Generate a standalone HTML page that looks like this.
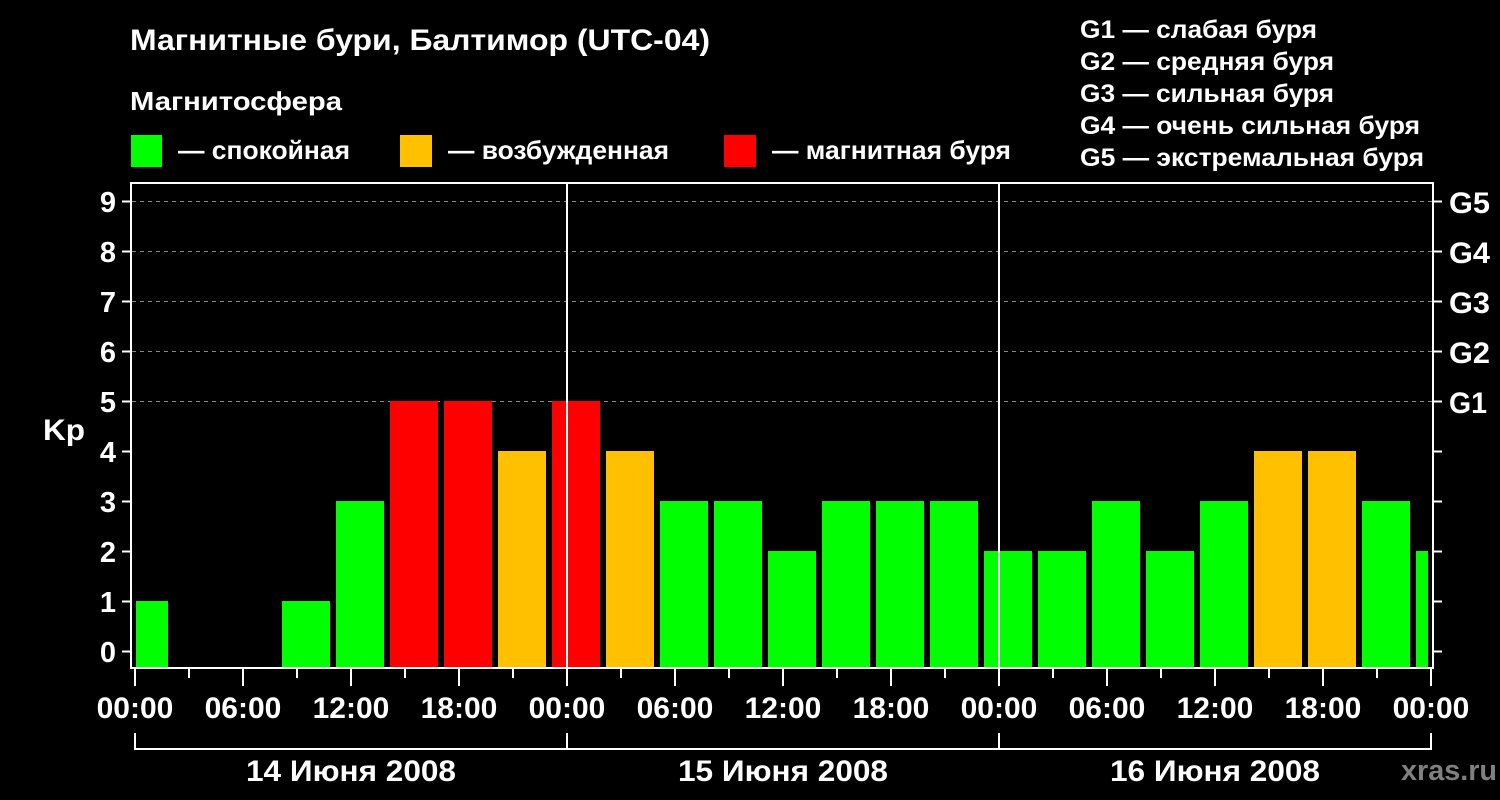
<!DOCTYPE html>
<html><head><meta charset="utf-8"><style>
html,body{margin:0;padding:0;background:#000;width:1500px;height:800px;overflow:hidden}
svg{display:block}
text{font-family:"Liberation Sans","DejaVu Sans",sans-serif;font-weight:bold;fill:#fff}
</style></head><body>
<svg width="1500" height="800" viewBox="0 0 1500 800" xmlns="http://www.w3.org/2000/svg">
<rect width="1500" height="800" fill="#000"/>
<text x="130" y="50" font-size="30" textLength="580" lengthAdjust="spacingAndGlyphs">Магнитные бури, Балтимор (UTC-04)</text>
<text x="130" y="110" font-size="26" textLength="212" lengthAdjust="spacingAndGlyphs">Магнитосфера</text>
<rect x="131" y="135" width="31" height="32" fill="#00ff00"/>
<text x="178" y="159" font-size="26" textLength="172" lengthAdjust="spacingAndGlyphs">— спокойная</text>
<rect x="400" y="135" width="32" height="32" fill="#ffc000"/>
<text x="448" y="159" font-size="26" textLength="221" lengthAdjust="spacingAndGlyphs">— возбужденная</text>
<rect x="724" y="135" width="32" height="32" fill="#ff0000"/>
<text x="772" y="159" font-size="26" textLength="239" lengthAdjust="spacingAndGlyphs">— магнитная буря</text>
<g font-size="25">
<text x="1080" y="38" textLength="237" lengthAdjust="spacingAndGlyphs">G1 — слабая буря</text>
<text x="1080" y="70" textLength="254" lengthAdjust="spacingAndGlyphs">G2 — средняя буря</text>
<text x="1080" y="102" textLength="254" lengthAdjust="spacingAndGlyphs">G3 — сильная буря</text>
<text x="1080" y="134" textLength="340" lengthAdjust="spacingAndGlyphs">G4 — очень сильная буря</text>
<text x="1080" y="166" textLength="344" lengthAdjust="spacingAndGlyphs">G5 — экстремальная буря</text>
</g>
<g stroke="#888" stroke-width="1" stroke-dasharray="4,4">
<line x1="132" y1="201.5" x2="1432" y2="201.5"/>
<line x1="132" y1="251.5" x2="1432" y2="251.5"/>
<line x1="132" y1="301.5" x2="1432" y2="301.5"/>
<line x1="132" y1="351.5" x2="1432" y2="351.5"/>
<line x1="132" y1="401.5" x2="1432" y2="401.5"/>
</g>
<g>
<rect x="136" y="601" width="32" height="66" fill="#00ff00"/>
<rect x="282" y="601" width="48" height="66" fill="#00ff00"/>
<rect x="336" y="501" width="48" height="166" fill="#00ff00"/>
<rect x="390" y="401" width="48" height="266" fill="#ff0000"/>
<rect x="444" y="401" width="48" height="266" fill="#ff0000"/>
<rect x="498" y="451" width="48" height="216" fill="#ffc000"/>
<rect x="552" y="401" width="48" height="266" fill="#ff0000"/>
<rect x="606" y="451" width="48" height="216" fill="#ffc000"/>
<rect x="660" y="501" width="48" height="166" fill="#00ff00"/>
<rect x="714" y="501" width="48" height="166" fill="#00ff00"/>
<rect x="768" y="551" width="48" height="116" fill="#00ff00"/>
<rect x="822" y="501" width="48" height="166" fill="#00ff00"/>
<rect x="876" y="501" width="48" height="166" fill="#00ff00"/>
<rect x="930" y="501" width="48" height="166" fill="#00ff00"/>
<rect x="984" y="551" width="48" height="116" fill="#00ff00"/>
<rect x="1038" y="551" width="48" height="116" fill="#00ff00"/>
<rect x="1092" y="501" width="48" height="166" fill="#00ff00"/>
<rect x="1146" y="551" width="48" height="116" fill="#00ff00"/>
<rect x="1200" y="501" width="48" height="166" fill="#00ff00"/>
<rect x="1254" y="451" width="48" height="216" fill="#ffc000"/>
<rect x="1308" y="451" width="48" height="216" fill="#ffc000"/>
<rect x="1362" y="501" width="48" height="166" fill="#00ff00"/>
<rect x="1416" y="551" width="12" height="116" fill="#00ff00"/>
</g>
<g stroke="#fff" stroke-width="2" fill="none">
<rect x="131" y="183" width="1302" height="485"/>
<line x1="567" y1="183" x2="567" y2="668"/>
<line x1="999" y1="183" x2="999" y2="668"/>
<path d="M122 201.5H131M122 251.5H131M122 301.5H131M122 351.5H131M122 401.5H131M122 451.5H131M122 501.5H131M122 551.5H131M122 601.5H131M122 651.5H131"/>
<path d="M1433 201.5H1442M1433 251.5H1442M1433 301.5H1442M1433 351.5H1442M1433 401.5H1442M1433 451.5H1442M1433 501.5H1442M1433 551.5H1442M1433 601.5H1442M1433 651.5H1442"/>
<path d="M135 669V686M189 669V678M243 669V686M297 669V678M351 669V686M405 669V678M459 669V686M513 669V678M567 669V686M621 669V678M675 669V686M729 669V678M783 669V686M837 669V678M891 669V686M945 669V678M999 669V686M1053 669V678M1107 669V686M1161 669V678M1215 669V686M1269 669V678M1323 669V686M1377 669V678M1431 669V686"/>
<path d="M135 733V749H1431V733M567 733V749M999 733V749"/>
</g>
<g font-size="29" text-anchor="end">
<text x="116" y="212">9</text><text x="116" y="262">8</text><text x="116" y="312">7</text><text x="116" y="362">6</text><text x="116" y="412">5</text>
<text x="116" y="462">4</text><text x="116" y="512">3</text><text x="116" y="562">2</text><text x="116" y="612">1</text><text x="116" y="662">0</text>
</g>
<text x="43" y="440" font-size="30" textLength="42" lengthAdjust="spacingAndGlyphs">Kp</text>
<g font-size="30">
<text x="1449" y="213" textLength="41" lengthAdjust="spacingAndGlyphs">G5</text><text x="1449" y="263" textLength="41" lengthAdjust="spacingAndGlyphs">G4</text><text x="1449" y="313" textLength="41" lengthAdjust="spacingAndGlyphs">G3</text><text x="1449" y="363" textLength="41" lengthAdjust="spacingAndGlyphs">G2</text><text x="1449" y="413" textLength="38" lengthAdjust="spacingAndGlyphs">G1</text>
</g>
<g font-size="30" text-anchor="middle">
<text x="135" y="718">00:00</text><text x="243" y="718">06:00</text><text x="351" y="718">12:00</text><text x="459" y="718">18:00</text>
<text x="567" y="718">00:00</text><text x="675" y="718">06:00</text><text x="783" y="718">12:00</text><text x="891" y="718">18:00</text>
<text x="999" y="718">00:00</text><text x="1107" y="718">06:00</text><text x="1215" y="718">12:00</text><text x="1323" y="718">18:00</text>
<text x="1431" y="718">00:00</text>
<text x="351" y="781" textLength="210" lengthAdjust="spacingAndGlyphs">14 Июня 2008</text>
<text x="783" y="781" textLength="210" lengthAdjust="spacingAndGlyphs">15 Июня 2008</text>
<text x="1215" y="781" textLength="210" lengthAdjust="spacingAndGlyphs">16 Июня 2008</text>
</g>
<text x="1401" y="780" font-size="29" style="fill:#808080" textLength="96" lengthAdjust="spacingAndGlyphs">xras.ru</text>
</svg>
</body></html>
